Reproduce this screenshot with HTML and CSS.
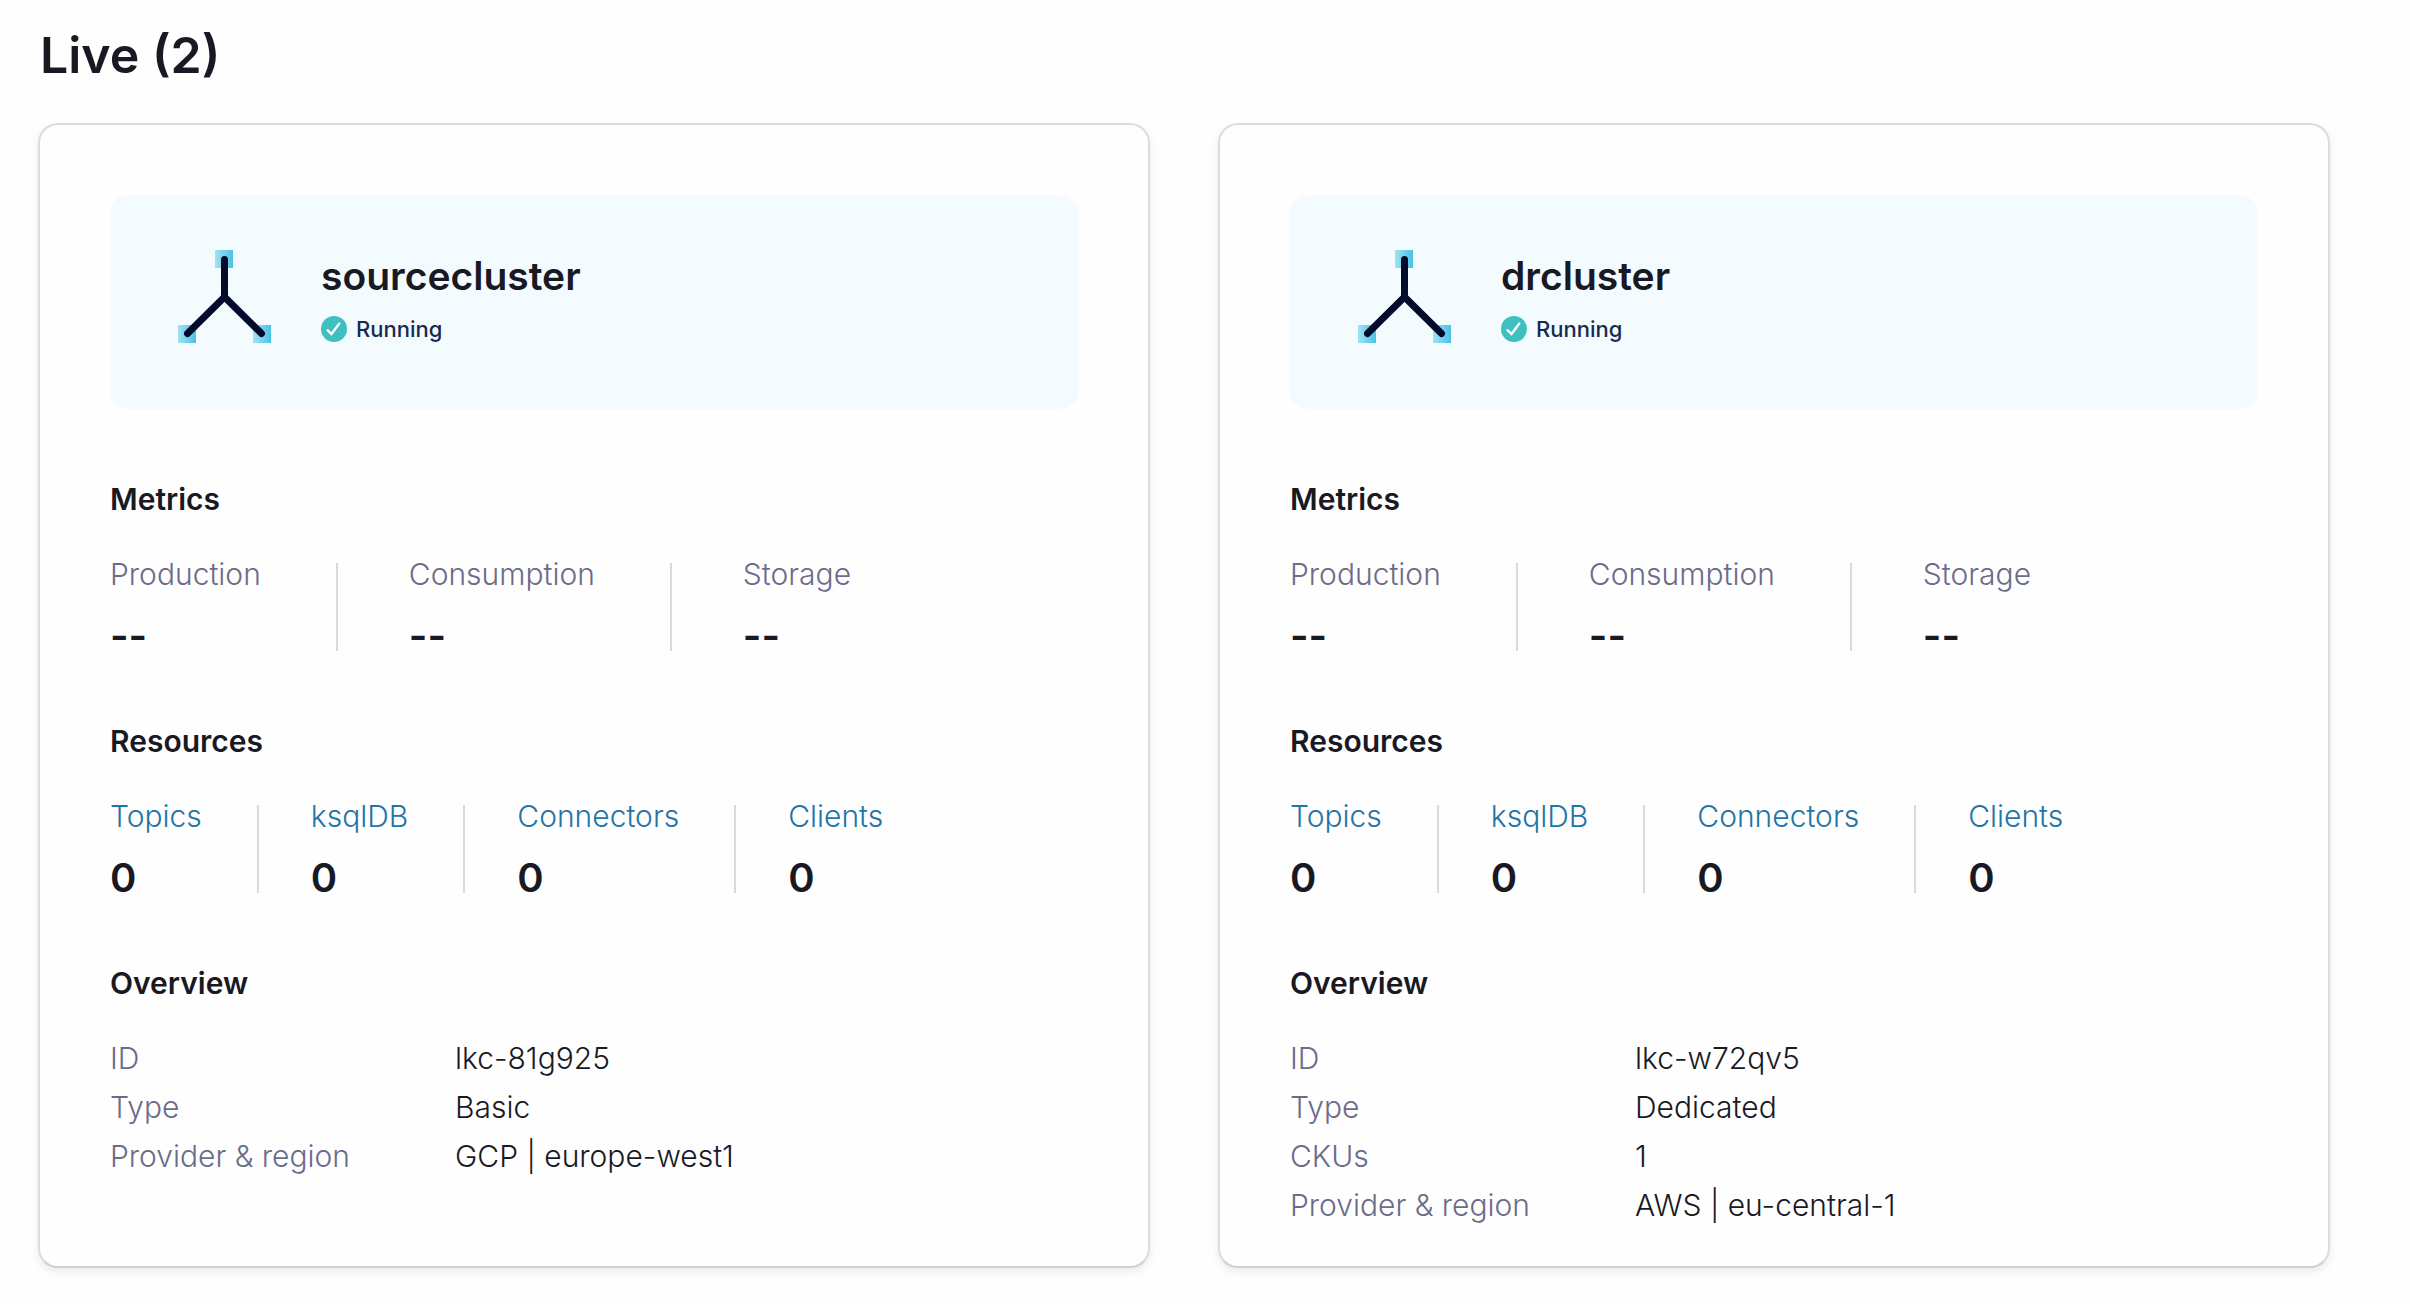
FILE: index.html
```html
<!DOCTYPE html>
<html lang="en">
<head>
  <meta charset="utf-8">
  <meta name="viewport" content="width=device-width, initial-scale=1">
  <title>Live clusters</title>
  <link rel="stylesheet" href="styles.css">
</head>
<body>
  <svg class="defs" width="0" height="0" aria-hidden="true">
    <defs>
      <linearGradient id="node-fill" x1="0" y1="0" x2="1" y2="0">
        <stop offset="0" stop-color="#a0e3f4"/>
        <stop offset="1" stop-color="#4cc1e6"/>
      </linearGradient>
      <symbol id="cluster" viewBox="0 0 93 93">
        <rect x="37" y="0" width="18" height="18" fill="url(#node-fill)"/>
        <rect x="0" y="75" width="18" height="18" fill="url(#node-fill)"/>
        <rect x="75" y="75" width="18" height="18" fill="url(#node-fill)"/>
        <path d="M46.500 9.500V47M9.500 83.500L46.500 47L83.500 83.500" fill="none" stroke="#020b2b" stroke-width="7" stroke-linecap="round"/>
      </symbol>
      <symbol id="check" viewBox="0 0 26 26">
        <circle cx="13" cy="13" r="13" fill="#40bfc1"/>
        <path d="M6.500 14.200L10.500 18L18.300 7.500" fill="none" stroke="#fff" stroke-width="2.300" stroke-linecap="round"/>
      </symbol>
    </defs>
  </svg>

  <main class="page">
    <h1 class="page-title">Live (2)</h1>
    <div class="cards">
      <article class="card">
        <header class="banner">
          <svg class="cluster-icon" aria-hidden="true"><use href="#cluster"/></svg>
          <div class="banner-text">
            <h2 class="name">sourcecluster</h2>
            <p class="status"><svg class="status-icon" aria-hidden="true"><use href="#check"/></svg>Running</p>
          </div>
        </header>
        <section class="section">
          <h3 class="heading">Metrics</h3>
          <dl class="stats stats-wide">
            <div class="stat"><dt>Production</dt><dd>--</dd></div>
            <div class="stat"><dt>Consumption</dt><dd>--</dd></div>
            <div class="stat"><dt>Storage</dt><dd>--</dd></div>
          </dl>
        </section>
        <section class="section">
          <h3 class="heading">Resources</h3>
          <dl class="stats">
            <div class="stat"><dt><a href="#topics">Topics</a></dt><dd>0</dd></div>
            <div class="stat"><dt><a href="#ksqldb">ksqlDB</a></dt><dd>0</dd></div>
            <div class="stat"><dt><a href="#connectors">Connectors</a></dt><dd>0</dd></div>
            <div class="stat"><dt><a href="#clients">Clients</a></dt><dd>0</dd></div>
          </dl>
        </section>
        <section class="section">
          <h3 class="heading">Overview</h3>
          <dl class="overview">
            <dt>ID</dt><dd>lkc-81g925</dd>
            <dt>Type</dt><dd>Basic</dd>
            <dt>Provider &amp; region</dt><dd>GCP | europe-west1</dd>
          </dl>
        </section>
      </article>

      <article class="card">
        <header class="banner">
          <svg class="cluster-icon" aria-hidden="true"><use href="#cluster"/></svg>
          <div class="banner-text">
            <h2 class="name">drcluster</h2>
            <p class="status"><svg class="status-icon" aria-hidden="true"><use href="#check"/></svg>Running</p>
          </div>
        </header>
        <section class="section">
          <h3 class="heading">Metrics</h3>
          <dl class="stats stats-wide">
            <div class="stat"><dt>Production</dt><dd>--</dd></div>
            <div class="stat"><dt>Consumption</dt><dd>--</dd></div>
            <div class="stat"><dt>Storage</dt><dd>--</dd></div>
          </dl>
        </section>
        <section class="section">
          <h3 class="heading">Resources</h3>
          <dl class="stats">
            <div class="stat"><dt><a href="#dr-topics">Topics</a></dt><dd>0</dd></div>
            <div class="stat"><dt><a href="#dr-ksqldb">ksqlDB</a></dt><dd>0</dd></div>
            <div class="stat"><dt><a href="#dr-connectors">Connectors</a></dt><dd>0</dd></div>
            <div class="stat"><dt><a href="#dr-clients">Clients</a></dt><dd>0</dd></div>
          </dl>
        </section>
        <section class="section">
          <h3 class="heading">Overview</h3>
          <dl class="overview">
            <dt>ID</dt><dd>lkc-w72qv5</dd>
            <dt>Type</dt><dd>Dedicated</dd>
            <dt>CKUs</dt><dd>1</dd>
            <dt>Provider &amp; region</dt><dd>AWS | eu-central-1</dd>
          </dl>
        </section>
      </article>
    </div>
  </main>
</body>
</html>
```
FILE: styles.css
```css
* {
  box-sizing: border-box;
  margin: 0;
  padding: 0;
}

body {
  background: #fefefe;
  color: #191924;
  font-family: Inter, "Liberation Sans", sans-serif;
  font-size: 30px;
  font-weight: 300;
}

.defs {
  display: block;
}

.page {
  padding: 22px 80px 32px 38px;
}

.page-title {
  margin: 0 0 35px 2px;
  font-size: 50px;
  font-weight: 600;
  line-height: 66px;
}

.cards {
  display: grid;
  grid-template-columns: 1fr 1fr;
  gap: 68px;
}

.card {
  padding: 70px 70px 36px;
  border: 2px solid #dcdcde;
  border-bottom-color: #d0d0d2;
  border-radius: 20px;
  background: #fefefe;
  box-shadow: 0 4px 8px rgba(0, 0, 0, 0.08);
}

.banner {
  display: flex;
  align-items: center;
  gap: 50px;
  padding: 55px 68px 66px;
  border-radius: 18px;
  background: #f3fbff;
}

.cluster-icon {
  flex: none;
  width: 93px;
  height: 93px;
}

.name {
  margin-bottom: 14px;
  font-size: 39px;
  font-weight: 600;
  line-height: 50px;
}

.status {
  display: flex;
  align-items: center;
  gap: 9px;
  color: #182a4e;
  font-size: 22px;
  font-weight: 500;
  line-height: 28px;
}

.status-icon {
  width: 26px;
  height: 26px;
}

.section {
  margin-top: 72px;
}

.heading {
  font-size: 30px;
  font-weight: 600;
  line-height: 36px;
}

.stats {
  display: flex;
  margin-top: 46px;
}

.stat {
  padding-right: 55px;
}

.stat + .stat {
  padding-left: 52px;
  border-left: 2px solid #d9d9e2;
}

.stats-wide .stat {
  padding-right: 75px;
}

.stats-wide .stat + .stat {
  padding-left: 71px;
}

.stat dt {
  margin-bottom: 36px;
  color: #6b6b8a;
  line-height: 22px;
}

.stat dd {
  font-size: 40px;
  font-weight: 600;
  line-height: 30px;
}

.stat a {
  color: #1f75a6;
  text-decoration: none;
}

.overview {
  display: grid;
  grid-template-columns: 345px 1fr;
  margin-top: 33px;
  line-height: 49px;
}

.overview dt {
  color: #6b6b8a;
}
```
